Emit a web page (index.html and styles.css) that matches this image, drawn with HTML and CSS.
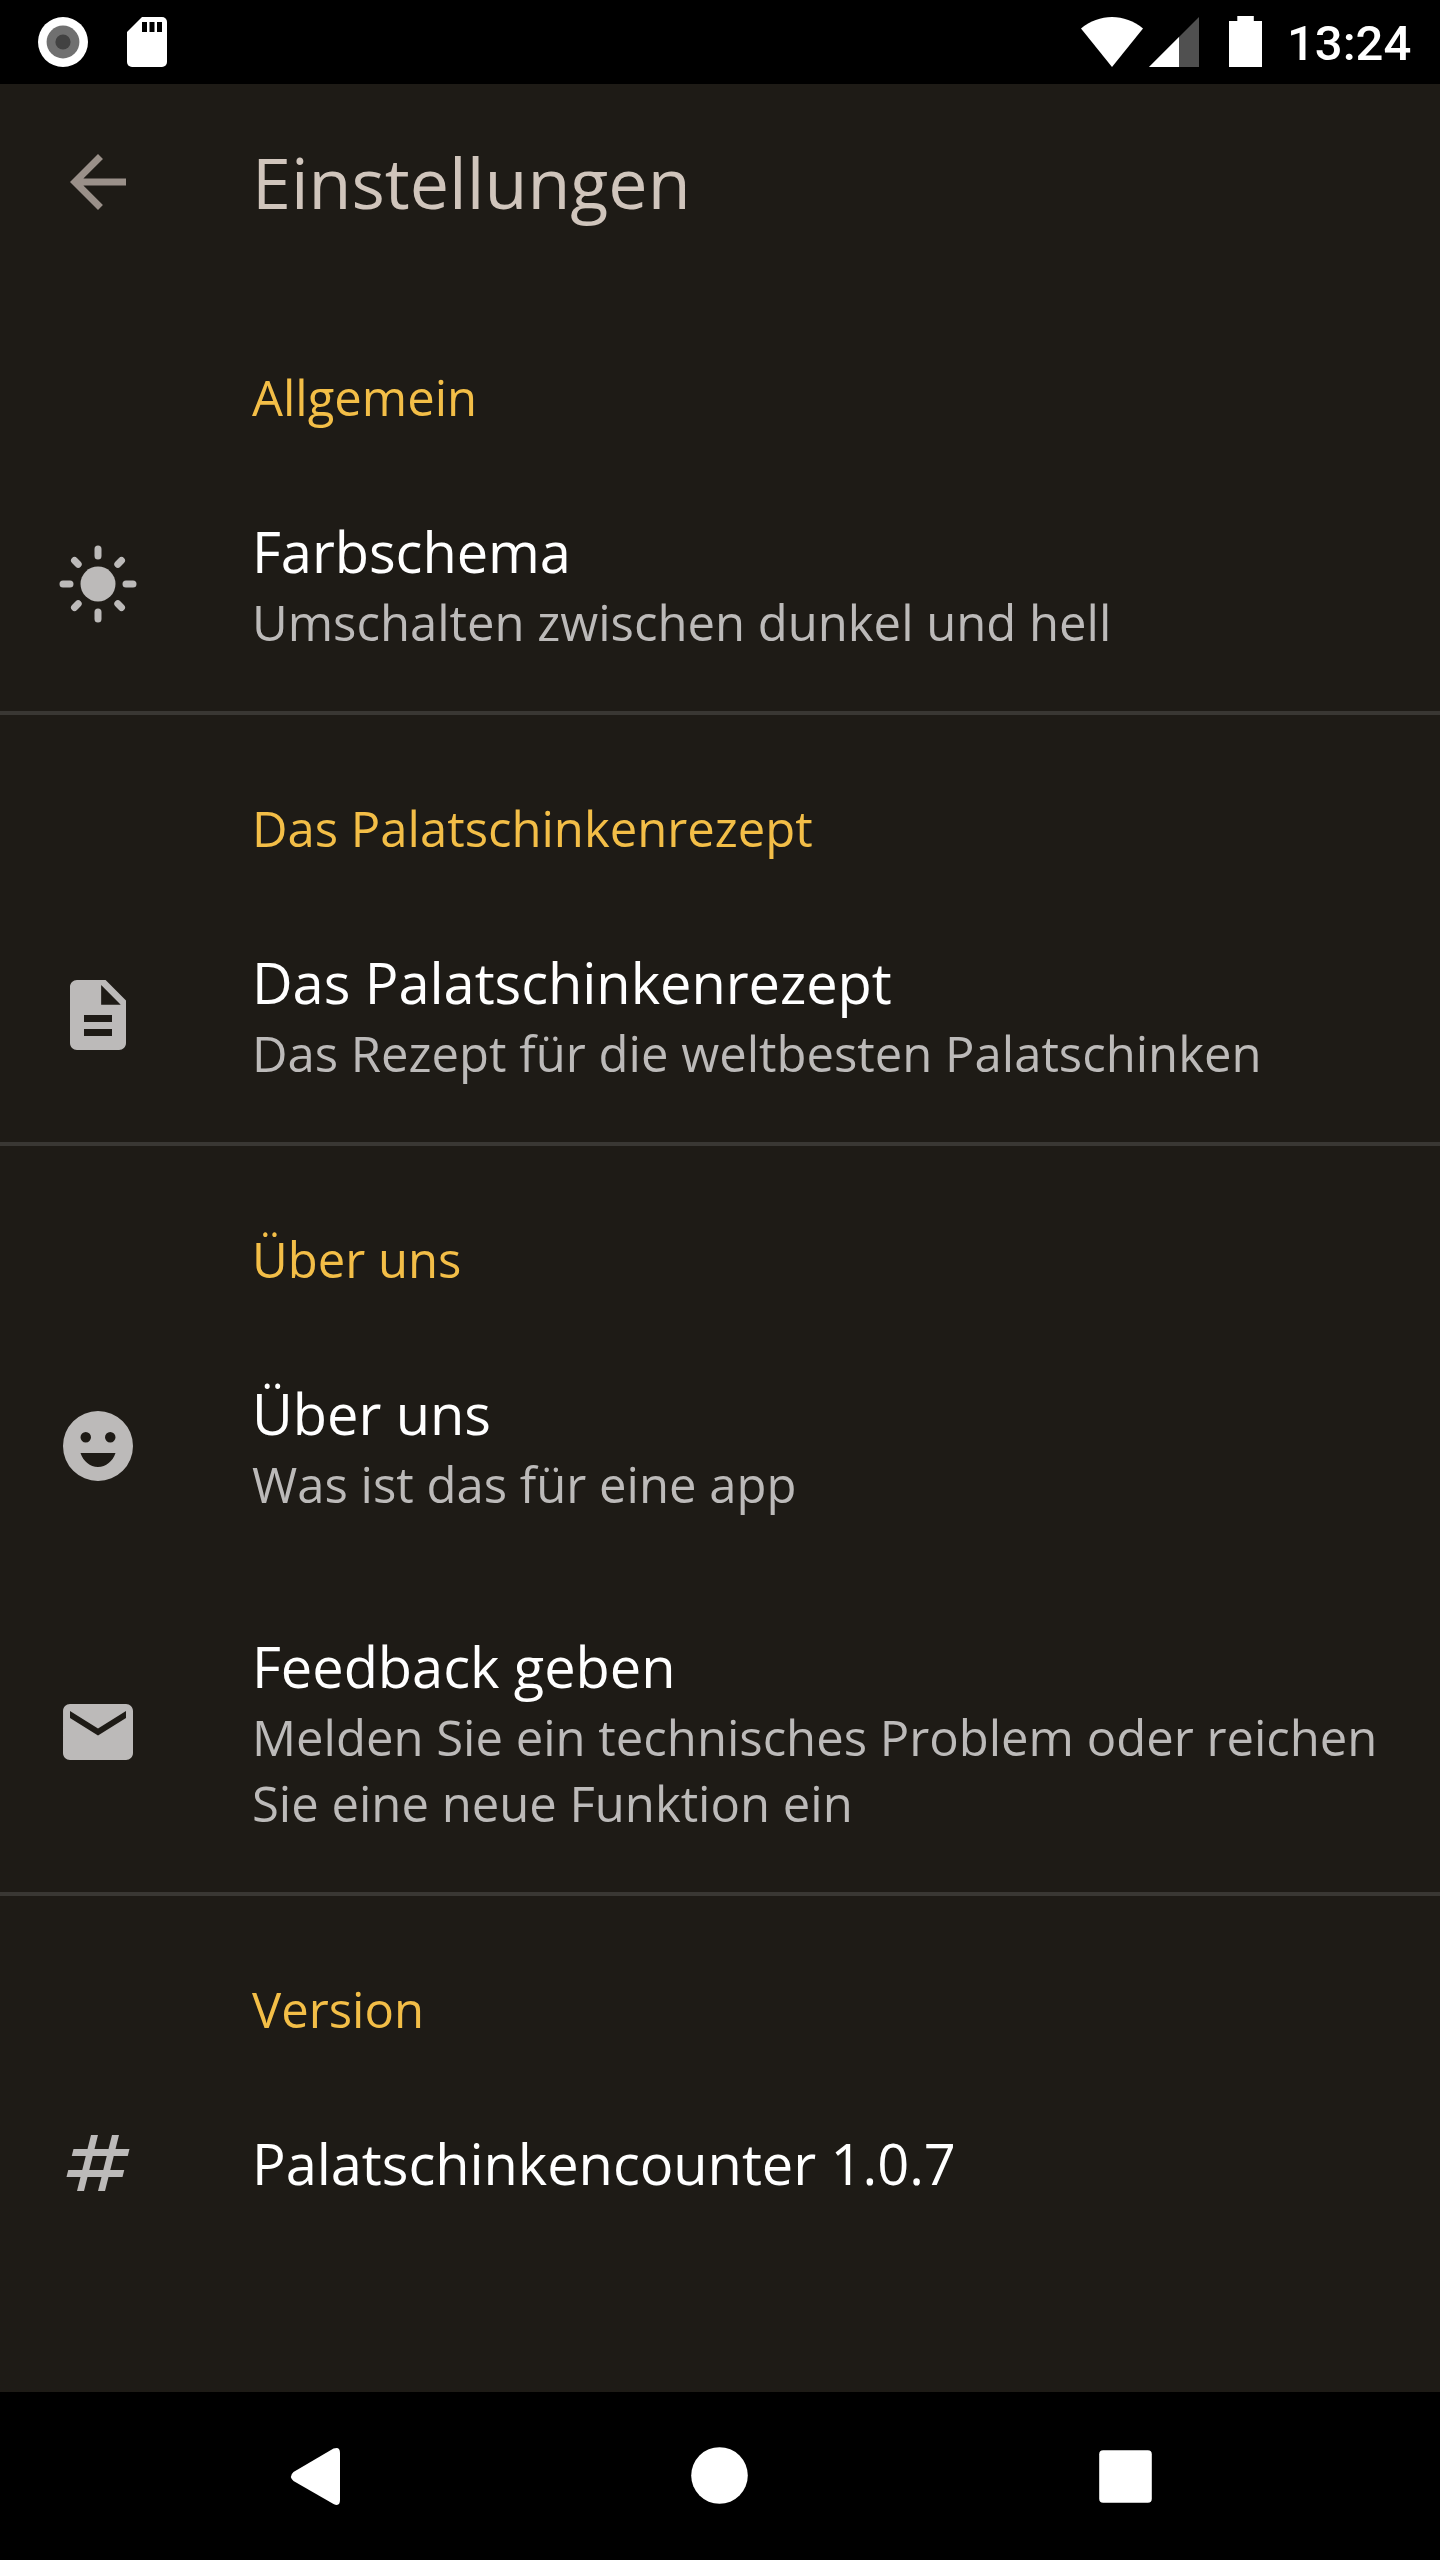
FILE: index.html
```html
<!DOCTYPE html>
<html lang="de">
<head>
<meta charset="utf-8">
<title>Einstellungen</title>
<link rel="stylesheet" href="styles.css">
</head>
<body>
<div class="screen">
  <div class="statusbar">
    <svg class="status-left" width="120" height="84" viewBox="0 0 120 84">
      <circle cx="25" cy="42" r="25" fill="#fff"/>
      <circle cx="25" cy="42" r="16.4" fill="#707070"/>
      <circle cx="25" cy="42" r="7.6" fill="#424242"/>
      <path fill="#fff" d="M104 17h20a5 5 0 0 1 5 5v40a5 5 0 0 1-5 5H94a5 5 0 0 1-5-5V32z"/>
      <path d="M104 22h5v10h-5zM111.500 22h5v10h-5zM119 22h5v10h-5z"/>
    </svg>
    <svg class="status-right" width="182" height="84" viewBox="0 0 182 84">
      <path fill="#fff" d="M0 28.500C9 21 20 17 31 17s22 4 31 11.500L31 67z"/>
      <path fill="#505050" d="M118 17v50H68z"/>
      <path fill="#fff" d="M98 37v30H68z"/>
      <path fill="#fff" d="M156.300 16h16.500v5h8.200v46h-33V21h8.300z"/>
    </svg>
    <span class="clock">13:24</span>
  </div>

  <header class="toolbar">
    <svg class="icon back" viewBox="0 0 24 24"><path d="M20 11H7.830l5.590-5.590L12 4l-8 8 8 8 1.410-1.410L7.830 13H20z"/></svg>
    <h1 class="toolbar-title">Einstellungen</h1>
  </header>

  <main class="settings">
    <section class="group">
      <h2 class="group-title">Allgemein</h2>
      <div class="item">
        <svg class="icon" viewBox="0 0 24 24"><circle cx="12" cy="12" r="5"/><path class="rays" d="M2 12h2M20 12h2M12 2v2M12 20v2M5.290 5.290l1.050 1.050M17.660 17.660l1.050 1.050M5.290 18.710l1.050-1.050M17.660 6.340l1.050-1.050"/></svg>
        <div class="text"><div class="name">Farbschema</div><div class="summary">Umschalten zwischen dunkel und hell</div></div>
      </div>
    </section>

    <section class="group">
      <h2 class="group-title">Das Palatschinkenrezept</h2>
      <div class="item">
        <svg class="icon" viewBox="0 0 24 24"><path fill-rule="evenodd" d="M14.170 2H6c-1.100 0-2 .9-2 2v16c0 1.100.9 2 2 2h12c1.100 0 2-.9 2-2V7.830zM12.900 3.400v5.700h5.600zM8 12h8v2H8zM8 16h8v2H8z"/></svg>
        <div class="text"><div class="name">Das Palatschinkenrezept</div><div class="summary">Das Rezept für die weltbesten Palatschinken</div></div>
      </div>
    </section>

    <section class="group">
      <h2 class="group-title">Über uns</h2>
      <div class="item item-tight">
        <svg class="icon" viewBox="0 0 24 24"><path fill-rule="evenodd" d="M12 2a10 10 0 1 0 0 20 10 10 0 0 0 0-20zM8.500 8a1.500 1.500 0 1 1 0 3 1.500 1.500 0 0 1 0-3zM15.500 8a1.500 1.500 0 1 1 0 3 1.500 1.500 0 0 1 0-3zM12 18c-2.280 0-4.220-1.660-5-4h10c-.78 2.340-2.720 4-5 4z"/></svg>
        <div class="text"><div class="name">Über uns</div><div class="summary">Was ist das für eine app</div></div>
      </div>
      <div class="item">
        <svg class="icon" viewBox="0 0 24 24"><path d="M20 4H4c-1.100 0-1.990.9-1.990 2L2 18c0 1.100.9 2 2 2h16c1.100 0 2-.9 2-2V6c0-1.100-.9-2-2-2zm0 4l-8 5-8-5V6l8 5 8-5v2z"/></svg>
        <div class="text"><div class="name">Feedback geben</div><div class="summary">Melden Sie ein technisches Problem oder reichen Sie eine neue Funktion ein</div></div>
      </div>
    </section>

    <section class="group">
      <h2 class="group-title">Version</h2>
      <div class="item">
        <svg class="icon" viewBox="0 0 24 24"><path fill-rule="evenodd" d="M20.500 10L21 8h-4l1-4h-2l-1 4h-4l1-4h-2L9 8H5l-.5 2h4l-1 4h-4L3 16h4l-1 4h2l1-4h4l-1 4h2l1-4h4l.5-2h-4l1-4zm-7 4h-4l1-4h4z"/></svg>
        <div class="text"><div class="name">Palatschinkencounter 1.0.7</div></div>
      </div>
    </section>
  </main>

  <nav class="navbar">
    <svg class="nav-icon" viewBox="0 0 98 98"><path d="M68.500 21.600Q75 19 75 26v47q0 7-6.500 4L28.500 54Q23.500 49.500 28.500 45z"/></svg>
    <svg class="nav-icon" viewBox="0 0 98 98"><circle cx="48.500" cy="48.500" r="28.300"/></svg>
    <svg class="nav-icon" viewBox="0 0 98 98"><rect x="22.200" y="23.200" width="52.600" height="52.600" rx="4"/></svg>
  </nav>
</div>
</body>
</html>
```
FILE: styles.css
```css
* { box-sizing: border-box; }

body {
  margin: 0;
  background: #000;
}

.screen {
  display: flex;
  flex-direction: column;
  width: 1440px;
  height: 2560px;
  overflow: hidden;
  background: #1e1b16;
  color: #fff;
  font-family: "Open Sans", "Noto Sans", sans-serif;
}

.statusbar {
  display: flex;
  align-items: center;
  flex: none;
  height: 84px;
  padding: 0 30px 0 38px;
  background: #000;
}

.status-left { overflow: visible; }

.status-right {
  margin-left: auto;
  margin-right: 24px;
}

.clock {
  width: 123px;
  padding-top: 3px;
  font: 500 49px/81px Roboto, sans-serif;
  text-align: right;
}

.toolbar {
  display: flex;
  align-items: center;
  flex: none;
  gap: 112px;
  height: 196px;
  padding: 0 56px;
}

.icon {
  flex: none;
  width: 84px;
  height: 84px;
  margin: -4px 0;
  fill: #bcbab9;
}

.back { fill: #9a9089; }

.rays {
  fill: none;
  stroke: #bcbab9;
  stroke-width: 2;
  stroke-linecap: round;
}

.toolbar-title {
  margin: 0;
  color: #d0c5bc;
  font-size: 70px;
  font-weight: 400;
  line-height: 96px;
}

.settings { flex: 1; }

.group + .group {
  background: linear-gradient(#393733, #393733) 0 0 / 100% 4px no-repeat;
}

.group-title {
  height: 177px;
  margin: 0;
  padding: 84px 56px 0 252px;
  color: #f3be47;
  font-size: 49px;
  font-weight: 400;
  line-height: 66px;
}

.item {
  display: flex;
  align-items: center;
  gap: 112px;
  padding: 56px;
}

.item-tight { margin-bottom: -1px; }

.name {
  font-size: 56px;
  letter-spacing: -0.05px;
  line-height: 76px;
}

.summary {
  color: #bcbab9;
  font-size: 49px;
  line-height: 66px;
}

.navbar {
  display: flex;
  align-items: center;
  justify-content: space-between;
  flex: none;
  height: 168px;
  padding: 0 265px;
  background: #000;
}

.nav-icon {
  width: 98px;
  height: 98px;
  fill: #fff;
}
```
